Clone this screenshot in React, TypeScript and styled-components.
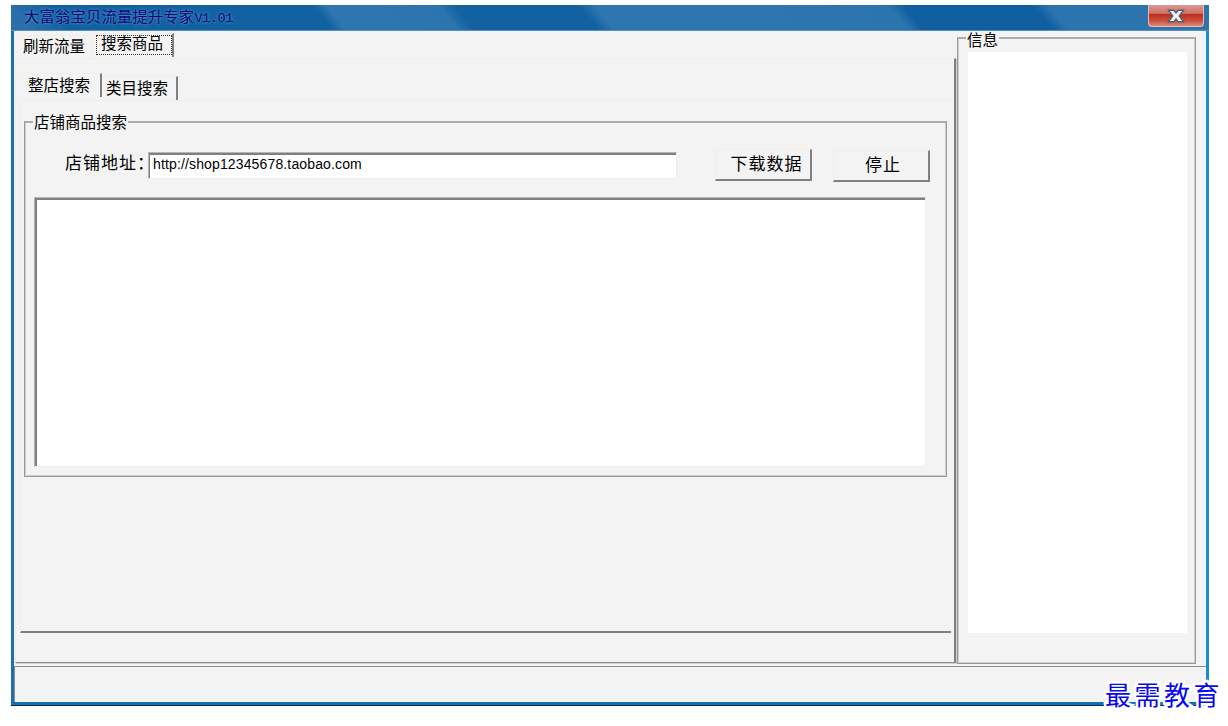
import styled, { createGlobalStyle } from 'styled-components'

const color = {
  face: '#f3f3f3',
  line: '#adadad',
  softLine: '#cfcfcf',
  shadow: '#808080',
  light: '#f1efe2',
  white: '#fff',
}

export default function App() {
  return (
    <Desktop>
      <GlobalStyle />
      <Window>
        <TitleBar>
          <Title>
            大富翁宝贝流量提升专家<Version>V1.01</Version>
          </Title>
          <CloseButton aria-label="关闭">
            <svg width="18" height="14" viewBox="0 0 18 14">
              <path d="M1.5 1.2h5.2L9 4l2.3-2.8h5.2L12.2 7l4.4 5.8h-5.4L9 9.9l-2.2 2.9H1.4L5.8 7z" fill="#eef2f5" stroke="#535e70" strokeWidth="1.4" />
            </svg>
          </CloseButton>
        </TitleBar>
        <Body>
          <MainPane>
            <MainTabs>
              <MainTab>刷新流量</MainTab>
              <MainTab $active>搜索商品</MainTab>
            </MainTabs>
            <MainPage>
              <SubTabs>
                <SubTab $active>整店搜索</SubTab>
                <SubTab>类目搜索</SubTab>
              </SubTabs>
              <SubPage>
                <ShopGroup>
                  <GroupTitle>店铺商品搜索</GroupTitle>
                  <SearchRow>
                    <Label htmlFor="shop">店铺地址：</Label>
                    <AddressInput id="shop" defaultValue="http://shop12345678.taobao.com" spellCheck={false} />
                    <Button>下载数据</Button>
                    <Button $lower>停止</Button>
                  </SearchRow>
                  <ResultBox />
                </ShopGroup>
              </SubPage>
            </MainPage>
          </MainPane>
          <InfoGroup>
            <GroupTitle $low>信息</GroupTitle>
            <InfoBox />
          </InfoGroup>
        </Body>
        <StatusBar />
        <Watermark>最需教育</Watermark>
      </Window>
    </Desktop>
  )
}

const GlobalStyle = createGlobalStyle`
  * {
    box-sizing: border-box;
  }
  body {
    margin: 0;
    background: #fff;
    color: #000;
    font-family: 'Liberation Sans', 'Noto Sans CJK SC', sans-serif;
    font-size: 15.5px;
  }
`

const Desktop = styled.div`
  height: 726px;
  padding: 5px 0 0 11px;
`

const Window = styled.div`
  position: relative;
  width: 1198px;
  height: 700px;
  display: flex;
  flex-direction: column;
  background: ${color.face};
  border: solid #1e6fae;
  border-width: 0 3px 3px;
  border-right-color: #1690cc;
  border-bottom-color: #1274ad;
  box-shadow: 0 1px #0a2c66;
`

const TitleBar = styled.header`
  height: 26px;
  flex: none;
  margin: 0 -3px;
  padding: 0 5px 0 13px;
  display: flex;
  justify-content: space-between;
  align-items: flex-start;
  border-bottom: 1px solid #5b8fbd;
  background: linear-gradient(
    51deg,
    #2a6fab 0 14px,
    #1262a1 44px 250px,
    #2f75b0 260px 300px,
    #2c74ae 347px,
    #1262a1 360px 457px,
    #2f75b0 469px 600px,
    #2c74ae 697px,
    #1060a1 709px 810px,
    #2c74ae 822px
  );
`

const Title = styled.h1`
  margin: 0;
  font: 15.2px/27px 'Liberation Mono', 'Noto Sans CJK SC', monospace;
  color: #06087a;
  text-shadow: 0 0 3px #6fa3d4;
  letter-spacing: 0.3px;
`

const Version = styled.span`
  font-size: 13.5px;
  letter-spacing: -0.4px;
`

const CloseButton = styled.button`
  width: 56px;
  height: 22px;
  padding: 0;
  display: flex;
  align-items: center;
  justify-content: center;
  border: 1px solid #f0b7ae;
  border-top: 0;
  border-radius: 0 0 4px 4px;
  background: linear-gradient(#d99a92 0, #cf7167 40%, #bd2d1d 45%, #c95040 75%, #dd8a7a);
`

const Body = styled.main`
  height: 633px;
  flex: none;
  display: flex;
`

const MainPane = styled.section`
  width: 943px;
  height: 633px;
  display: flex;
  flex-direction: column;
  padding-left: 1px;
`

const MainTabs = styled.nav`
  height: 27px;
  flex: none;
  display: flex;
  align-items: flex-start;
`

const MainTab = styled.div<{ $active?: boolean }>`
  margin-top: ${({ $active }) => ($active ? 2 : 4)}px;
  margin-left: ${({ $active }) => ($active ? 2 : 3)}px;
  width: ${({ $active }) => ($active ? 80 : 74)}px;
  height: 24px;
  padding-left: ${({ $active }) => ($active ? 7 : 5)}px;
  line-height: ${({ $active }) => ($active ? 19 : 21)}px;
  white-space: nowrap;
  border-top: 1px solid ${color.light};
  border-right: ${({ $active }) => ($active ? `2px solid ${color.shadow}` : `1px solid ${color.light}`)};
  ${({ $active }) => $active && 'outline: 1px dotted #333; outline-offset: -3px;'}
`

const MainPage = styled.div`
  height: 605px;
  padding: 14px 3px 0 4px;
  border-top: 1px solid ${color.light};
  border-left: 1px solid ${color.light};
  border-right: 2px solid ${color.shadow};
  border-bottom: 1px solid #8b8b8b;
  box-shadow: 1px 1px ${color.softLine};
  margin-right: 1px;
`

const SubTabs = styled.nav`
  height: 27px;
  display: flex;
`

const SubTab = styled.div<{ $active?: boolean }>`
  margin-top: ${({ $active }) => ($active ? 0 : 3)}px;
  width: ${({ $active }) => ($active ? 82 : 76)}px;
  height: 24px;
  padding-left: ${({ $active }) => ($active ? 8 : 4)}px;
  line-height: 23px;
  white-space: nowrap;
  border-top: 1px solid ${color.light};
  border-right: 2px solid ${color.shadow};
`

const SubPage = styled.div`
  height: 533px;
  padding: 20px 0 0 3px;
  border-top: 1px solid ${color.light};
  border-left: 1px solid ${color.light};
  border-bottom: 2px solid ${color.shadow};
`

const Group = styled.fieldset`
  position: relative;
  min-width: 0;
  margin: 0;
  padding: 0 1px 1px;
  border: 1px solid #989898;
  border-top: 2px solid ${color.line};
  box-shadow: inset 1px 0 ${color.softLine}, inset -1px -1px ${color.softLine};
`

const ShopGroup = styled(Group)`
  width: 923px;
  height: 356px;
`

const InfoGroup = styled(Group)`
  width: 239px;
  height: 627px;
  margin-top: 6px;
`

/* Caption sits over the top edge of the frame */
const GroupTitle = styled.div<{ $low?: boolean }>`
  position: absolute;
  top: ${({ $low }) => ($low ? -7 : -10)}px;
  left: 8px;
  padding: 0 1px;
  line-height: ${({ $low }) => ($low ? 18 : 20)}px;
  background: ${color.face};
`

const SearchRow = styled.div`
  height: 74px;
  display: flex;
  align-items: flex-start;
  padding: 26px 0 0 39px;
`

const Label = styled.label`
  width: 83px;
  margin-top: 5px;
  line-height: 20px;
  font-size: 17px;
  letter-spacing: 1px;
  white-space: nowrap;
`

const AddressInput = styled.input`
  width: 529px;
  height: 27px;
  margin: 3px 38px 0 0;
  padding: 0 0 3px 4px;
  border: 1px solid ${color.light};
  border-top-color: #b5b5b5;
  border-left-color: #b5b5b5;
  box-shadow: inset 1px 2px ${color.shadow};
  outline: none;
  font: 14px 'Liberation Sans', sans-serif;
  letter-spacing: 0.14px;
`

const Button = styled.button<{ $lower?: boolean }>`
  width: 97px;
  height: 32px;
  margin: ${({ $lower }) => ($lower ? '1px 0 0 21px' : 0)};
  padding: 0 0 ${({ $lower }) => ($lower ? '5px 4px' : '6px 7px')};
  border: 1px solid ${color.light};
  border-right: 2px solid ${color.shadow};
  border-bottom: 2px solid ${color.shadow};
  background: ${color.face};
  color: #000;
  font: 17px 'Noto Sans CJK SC', sans-serif;
  letter-spacing: 1px;
`

const ResultBox = styled.div`
  width: 892px;
  height: 270px;
  margin-left: 8px;
  background: ${color.white};
  border: 1px solid ${color.light};
  border-top-color: #b5b5b5;
  border-left-color: #b5b5b5;
  box-shadow: inset 2px 2px ${color.shadow};
`

const InfoBox = styled.div`
  width: 219px;
  height: 581px;
  margin: 13px 0 0 9px;
  background: ${color.white};
`

const StatusBar = styled.footer`
  height: 36px;
  margin-top: 2px;
  border-top: 1px solid #8b8b8b;
  border-left: 1px solid #8b8b8b;
`

/* Stamp overlapping the bottom right corner of the window */
const Watermark = styled.div`
  position: absolute;
  right: -17px;
  bottom: -10px;
  font: 400 26px/36px 'Noto Sans CJK SC', sans-serif;
  letter-spacing: 3.5px;
  color: #0808f0;
  -webkit-text-stroke: 5px #fff;
  paint-order: stroke fill;
  white-space: nowrap;
`
